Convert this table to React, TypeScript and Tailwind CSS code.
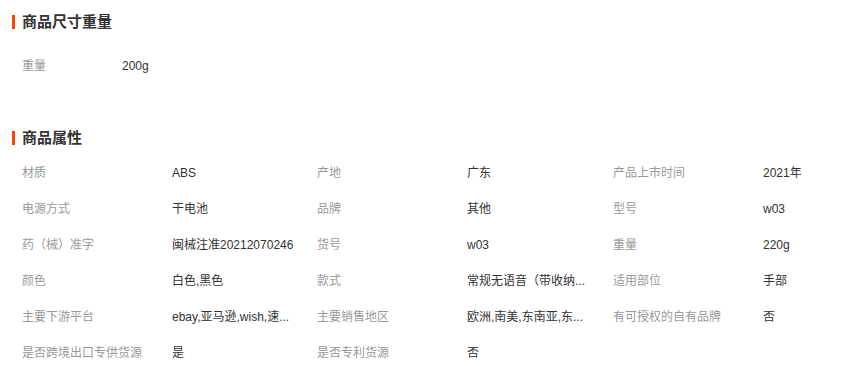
import React from "react";

const rows: [string, string][][] = [
  [["材质", "ABS"], ["产地", "广东"], ["产品上市时间", "2021年"]],
  [["电源方式", "干电池"], ["品牌", "其他"], ["型号", "w03"]],
  [["药（械）准字", "闽械注准20212070246"], ["货号", "w03"], ["重量", "220g"]],
  [["颜色", "白色,黑色"], ["款式", "常规无语音（带收纳..."], ["适用部位", "手部"]],
  [["主要下游平台", "ebay,亚马逊,wish,速..."], ["主要销售地区", "欧洲,南美,东南亚,东..."], ["有可授权的自有品牌", "否"]],
  [["是否跨境出口专供货源", "是"], ["是否专利货源", "否"]],
];

const valueWidths = ["w-[145px]", "w-[146px]", "w-[98px]"];

function Title({ text }: { text: string }) {
  return (
    <div className="flex items-center h-[20px]">
      <div className="w-[3px] h-[14px] bg-[#ff4400] ml-[12px]" />
      <div className="ml-[7px] text-[15px] font-bold text-[#333] leading-[20px]">{text}</div>
    </div>
  );
}

export default function App() {
  return (
    <div
      className="w-[861px] h-[374px] bg-white overflow-hidden"
      style={{ fontFamily: '"Liberation Sans", "Noto Sans CJK SC", sans-serif' }}
    >
      <div className="pt-[12px]">
        <Title text="商品尺寸重量" />
        <div className="mt-[16px] flex items-center h-[36px] text-[12px] pl-[22px]">
          <div className="w-[100px] text-[#999]">重量</div>
          <div className="text-[#333]">200g</div>
        </div>
      </div>
      <div className="mt-[44px]">
        <Title text="商品属性" />
        <div className="mt-[7px] pl-[22px]">
          {rows.map((r, i) => (
            <div key={i} className="flex items-center h-[36px] text-[12px]">
              {r.map(([k, v], j) => (
                <React.Fragment key={j}>
                  <div className="w-[150px] shrink-0 text-[#999] whitespace-nowrap">{k}</div>
                  <div className={`${valueWidths[j]} shrink-0 text-[#333] whitespace-nowrap`}>{v}</div>
                </React.Fragment>
              ))}
            </div>
          ))}
        </div>
      </div>
    </div>
  );
}
